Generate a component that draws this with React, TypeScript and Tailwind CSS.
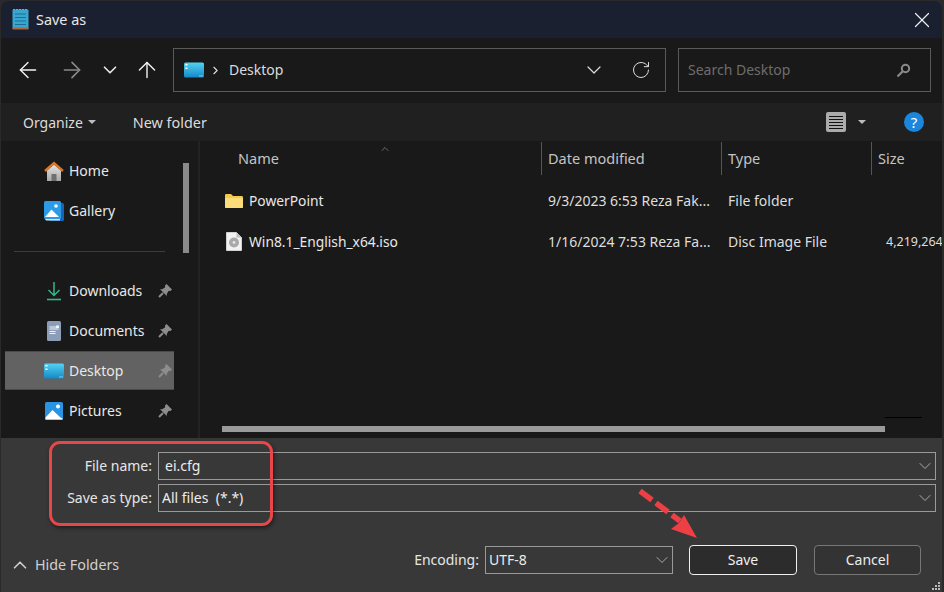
import { ArrowLeft, ArrowRight, ArrowUp, ChevronDown, ChevronRight, ChevronUp, RotateCw, X } from 'lucide-react';
import type { ReactNode } from 'react';

function NotepadIcon() {
  return (
    <svg width="17" height="21" viewBox="0 0 17 21">
      <rect x="0.5" y="0.5" width="16" height="19.5" rx="1" fill="#38a6cf" />
      <rect x="0.5" y="18.5" width="16" height="2" fill="#a8683a" />
      <path d="M3 5h11M3 8.500h11M3 12h11M3 15.500h11" stroke="#1c6f94" strokeWidth="1.200" />
      <path d="M2 1v-1M5 1v-1M8 1v-1M11 1v-1M14 1v-1" stroke="#cfe8f2" />
    </svg>
  );
}

function DesktopIcon({ id }: { id: string }) {
  return (
    <svg width="20" height="16" viewBox="0 0 20 16">
      <defs>
        <linearGradient id={id} x1="0" y1="0" x2="0" y2="1">
          <stop offset="0" stopColor="#53d2f2" />
          <stop offset="1" stopColor="#1488c8" />
        </linearGradient>
      </defs>
      <rect x="0" y="0.500" width="20" height="15" rx="1.500" fill={`url(#${id})`} />
      <rect x="1.500" y="2" width="2" height="1.500" fill="#fff" />
      <rect x="1.500" y="5.500" width="2" height="1.500" fill="#fff" />
      <rect x="15.500" y="13.500" width="1" height="1" fill="#fff" />
      <rect x="17.500" y="13.500" width="1" height="1" fill="#fff" />
    </svg>
  );
}

function HomeIcon() {
  return (
    <svg width="20" height="20" viewBox="0 0 20 20">
      <defs>
        <linearGradient id="homeBody" x1="0" y1="0" x2="0" y2="1">
          <stop offset="0" stopColor="#e4e4e4" />
          <stop offset="1" stopColor="#a8a8a8" />
        </linearGradient>
      </defs>
      <path d="M3 9.500 10 3.500l7 6V20H3z" fill="url(#homeBody)" />
      <rect x="7.500" y="13" width="5" height="7" rx="0.500" fill="#6f6f6f" />
      <path d="M1 10 10 2l9 8" fill="none" stroke="#d9782a" strokeWidth="2.400" />
    </svg>
  );
}

function GalleryIcon() {
  return (
    <svg width="20" height="20" viewBox="0 0 20 20">
      <rect x="5" y="2" width="15" height="18" rx="1.500" fill="#1565b5" />
      <rect x="0" y="0" width="17" height="18" rx="1.500" fill="#2b9be8" />
      <circle cx="12" cy="5" r="1.800" fill="#fff" />
      <path d="M1 16 7.500 8.500 15 16z" fill="#fff" />
      <path d="M1 18h15v1.500H2z" fill="#cfe6f8" />
    </svg>
  );
}

function DownloadIcon() {
  return (
    <svg width="16" height="20" viewBox="0 0 16 20">
      <path d="M8 1v13M2.500 9 8 14.500 13.500 9" fill="none" stroke="#36b58e" strokeWidth="1.500" />
      <path d="M1 18.500h14" stroke="#36b58e" strokeWidth="1.600" />
    </svg>
  );
}

function DocumentIcon() {
  return (
    <svg width="14" height="20" viewBox="0 0 14 20">
      <rect width="14" height="20" rx="1.500" fill="#8c9db8" />
      <path d="M2.500 6h9M2.500 8h9M2.500 10.500h6M2.500 12.500h6" stroke="#f1f4f8" strokeWidth="1" />
      <rect x="9" y="4.500" width="3" height="2.500" fill="#f1f4f8" />
    </svg>
  );
}

function PicturesIcon() {
  return (
    <svg width="18" height="18" viewBox="0 0 18 18">
      <rect width="18" height="18" rx="1.500" fill="#2a94e2" />
      <circle cx="13" cy="4.500" r="2" fill="#fff" />
      <path d="M0.500 15.500 7.500 8l8 7.500 2 1v1H0.500z" fill="#fff" />
    </svg>
  );
}

function PinIcon() {
  return (
    <svg width="14" height="14" viewBox="0 0 14 14">
      <path d="M8.500 0 14 5.500 12.500 7 10.800 6.800 8.800 9.800 8.800 12 2 5.200 4.200 5.200 7.200 3.200 7 1.500z" fill="#8d8d8d" />
      <path d="M5 9 1 13" stroke="#8d8d8d" strokeWidth="2" />
    </svg>
  );
}

function FolderIcon() {
  return (
    <svg width="18" height="14" viewBox="0 0 18 14">
      <path d="M0 1.500C0 .700.500 0 1.300 0H6l2 2h8.700c.700 0 1.300.600 1.300 1.300V12.700c0 .700-.600 1.300-1.300 1.300H1.300C.500 14 0 13.300 0 12.700z" fill="#f7c948" />
      <path d="M0 4h18v8.700c0 .700-.600 1.300-1.300 1.300H1.300C.500 14 0 13.300 0 12.700z" fill="#fbdc7a" />
    </svg>
  );
}

function DiscFileIcon() {
  return (
    <svg width="16" height="19" viewBox="0 0 16 19">
      <path d="M.500.500h10l5 5v13H.500z" fill="#f2f2f2" stroke="#d0d0d0" />
      <path d="M10.500.500v5h5" fill="#bdbdbd" />
      <circle cx="8" cy="10.500" r="5" fill="#a9a9a9" />
      <circle cx="8" cy="10.500" r="1.400" fill="#e8e8e8" />
    </svg>
  );
}

function SearchIcon() {
  return (
    <svg width="15" height="15" viewBox="0 0 15 15">
      <circle cx="9.500" cy="5.500" r="3.700" fill="none" stroke="#8a8a8a" strokeWidth="2" />
      <path d="M6.500 8.500 1.500 13.500" stroke="#8a8a8a" strokeWidth="2.200" />
    </svg>
  );
}

function ViewIcon() {
  return (
    <div className="flex h-5 w-5 flex-col justify-center gap-[2px] rounded-[2px] bg-[#ababab] px-[3px]">
      <div className="h-[1px] bg-[#111]" />
      <div className="h-[1px] bg-[#111]" />
      <div className="h-[1px] bg-[#111]" />
      <div className="h-[1px] bg-[#111]" />
      <div className="h-[1px] bg-[#111]" />
    </div>
  );
}

function Caret() {
  return <div className="h-0 w-0 border-x-[4.500px] border-t-[4.500px] border-x-transparent border-t-[#bdbdbd]" />;
}

function NavRow({ icon, label, pinned, active }: { icon: ReactNode; label: string; pinned?: boolean; active?: boolean }) {
  return (
    <div className={`flex items-center ${active ? 'mb-[1px] h-[39px] border-y border-[#4a4a4a] bg-[#626262]' : 'h-10'}`}>
      <div className="ml-[39px] flex w-5 shrink-0 justify-center">{icon}</div>
      <span className="ml-[5px] flex-1 text-[#e8e8e8]">{label}</span>
      {pinned && (
        <div className="mr-[2px]">
          <PinIcon />
        </div>
      )}
    </div>
  );
}

function FileRow({ icon, name, date, type, size }: { icon: ReactNode; name: string; date: string; type: string; size?: string }) {
  return (
    <div className="flex h-[41px] items-center whitespace-nowrap text-[#dedede]">
      <div className="flex w-[22px] shrink-0 justify-center pl-[2px]">{icon}</div>
      <span className="ml-[5px] w-[299px] shrink-0 text-[13.800px] text-[#e8e8e8]">{name}</span>
      <span className="w-[180px] shrink-0 overflow-hidden">{date}</span>
      <span className="w-[158px] shrink-0">{type}</span>
      <span className="text-[12.500px]">{size}</span>
    </div>
  );
}

function ColHead({ label, className }: { label: string; className: string }) {
  return (
    <div className={`flex h-[33px] shrink-0 items-center border-l border-[#555] pb-[2px] pl-[6px] text-[14.500px] text-[#c4c4c4] ${className}`}>{label}</div>
  );
}

function Combo({ value, className }: { value: string; className: string }) {
  return (
    <div className={`flex items-center justify-between border border-[#9a9a9a] text-[#ececec] ${className}`}>
      <span className="whitespace-pre">{value}</span>
      <ChevronDown size={20} strokeWidth={0.900} className="text-[#cfcfcf]" />
    </div>
  );
}

export default function App() {
  return (
    <div className="relative h-[592px] w-[944px] overflow-hidden bg-[#2a2a2a] pl-[1px] pr-[2px] pt-[1px] font-['Noto_Sans',sans-serif] text-[14px] leading-5">
      <div className="flex h-full flex-col overflow-hidden rounded-t-[8px]">
        <div className="flex h-[37px] shrink-0 items-center justify-between bg-[#1a2030] pl-[11px] pr-[7px]">
          <div className="flex items-center gap-[7px] text-[14.400px] text-[#e8e8e8]">
            <NotepadIcon />
            <span>Save as</span>
          </div>
          <X size={26} strokeWidth={1.100} className="text-[#f0f0f0]" />
        </div>

        <div className="flex h-[65px] shrink-0 items-center bg-[#191919] pb-[1px] pl-[14px]">
          <ArrowLeft size={26} strokeWidth={1.300} className="text-[#f2f2f2]" />
          <ArrowRight size={26} strokeWidth={1.500} className="ml-[18px] text-[#8a8a8a]" />
          <ChevronDown size={22} strokeWidth={1.800} className="ml-[14px] text-[#e8e8e8]" />
          <ArrowUp size={26} strokeWidth={1.300} className="ml-[13px] text-[#f2f2f2]" />
          <div className="ml-[13px] flex h-[44px] w-[493px] items-center border border-[#5a5a5a] pl-[10px] pr-[14px]">
            <DesktopIcon id="deskAddress" />
            <ChevronRight size={13} strokeWidth={2} className="ml-[5px] text-[#e0e0e0]" />
            <span className="ml-[7px] flex-1 text-[#dcdcdc]">Desktop</span>
            <ChevronDown size={24} strokeWidth={1.200} className="text-[#dcdcdc]" />
            <RotateCw size={20} strokeWidth={1.200} className="ml-[25px] text-[#dcdcdc]" />
          </div>
          <div className="ml-[12px] flex h-[44px] w-[253px] items-center justify-between border border-[#5a5a5a] pl-[9px] pr-[19px] text-[#6d6d6d]">
            <span>Search Desktop</span>
            <SearchIcon />
          </div>
        </div>

        <div className="flex h-[38px] shrink-0 items-center bg-[#202020] pl-[22px] text-[#dcdcdc]">
          <span className="mt-[2px]">Organize</span>
          <div className="ml-[5px]">
            <Caret />
          </div>
          <span className="ml-[37px] mt-[2px] text-[14.400px]">New folder</span>
          <div className="ml-auto">
            <ViewIcon />
          </div>
          <div className="ml-[12px]">
            <Caret />
          </div>
          <div className="ml-[38px] mr-[18px] flex h-5 w-5 items-center justify-center rounded-full bg-[#1a86dc] text-[15px] text-white">?</div>
        </div>

        <div className="flex min-h-0 flex-1 bg-[#191919]">
          <div className="flex w-[199px] shrink-0 border-r-2 border-[#232323] pt-[10px]">
            <div className="w-[173px] shrink-0 pl-[4px]">
              <NavRow icon={<HomeIcon />} label="Home" />
              <NavRow icon={<GalleryIcon />} label="Gallery" />
              <div className="flex h-10 items-center px-[9px]">
                <div className="h-[1px] w-full bg-[#3c3c3c]" />
              </div>
              <NavRow icon={<DownloadIcon />} label="Downloads" pinned />
              <NavRow icon={<DocumentIcon />} label="Documents" pinned />
              <NavRow icon={<DesktopIcon id="deskNav" />} label="Desktop" pinned active />
              <NavRow icon={<PicturesIcon />} label="Pictures" pinned />
            </div>
            <div className="ml-[9px] mt-[12px] h-[90px] w-[6px] bg-[#8a8a8a]" />
          </div>

          <div className="relative min-w-0 flex-1 overflow-hidden pl-[22px]">
            <div className="ml-[5px] flex h-[35px] items-center">
              <div className="flex h-[33px] w-[314px] shrink-0 items-center pb-[2px] pl-[11px] text-[14.500px] text-[#c4c4c4]">Name</div>
              <ColHead label="Date modified" className="w-[180px]" />
              <ColHead label="Type" className="w-[150px]" />
              <ColHead label="Size" className="w-[80px]" />
            </div>
            <div className="absolute left-[179px] top-[2px]">
              <ChevronUp size={12} strokeWidth={1} className="text-[#bdbdbd]" />
            </div>
            <div className="pt-[4px]">
              <FileRow icon={<FolderIcon />} name="PowerPoint" date="9/3/2023 6:53 Reza Fak..." type="File folder" />
              <FileRow icon={<DiscFileIcon />} name="Win8.1_English_x64.iso" date="1/16/2024 7:53 Reza Fa..." type="Disc Image File" size="4,219,264" />
            </div>
            <div className="absolute bottom-[20px] left-[685px] h-[1px] w-[37px] bg-black" />
            <div className="absolute bottom-[6px] left-[22px] h-[6px] w-[663px] bg-[#9a9a9a]" />
          </div>
        </div>

        <div className="flex h-[154px] shrink-0 flex-col bg-[#383838] pr-[6px] pt-[14px] text-[#e6e6e6]">
          <div className="flex h-[28px] items-center">
            <span className="w-[151px] shrink-0 text-right">File name:</span>
            <Combo value="ei.cfg" className="ml-[6px] h-[28px] flex-1 pl-[6px]" />
          </div>
          <div className="mt-[4px] flex h-[28px] items-center">
            <span className="w-[151px] shrink-0 text-right">Save as type:</span>
            <Combo value="All files  (*.*)" className="ml-[6px] h-[28px] flex-1 pl-[3px]" />
          </div>
          <div className="mt-[33px] flex h-[30px] items-center pl-[8px] pr-[15px]">
            <div className="mt-[10px] flex items-center text-[14.300px] text-[#d0d0d0]">
              <ChevronUp size={22} strokeWidth={1.800} className="text-[#cfcfcf]" />
              <span className="ml-[4px]">Hide Folders</span>
            </div>
            <span className="ml-auto">Encoding:</span>
            <Combo value="UTF-8" className="ml-[6px] h-[28px] w-[188px] pl-[3px]" />
            <button className="ml-[16px] h-[30px] w-[108px] rounded-[4px] border border-[#f0f0f0] bg-[#2c2c2c] text-[#f0f0f0]">Save</button>
            <button className="ml-[17px] h-[30px] w-[107px] rounded-[4px] border border-[#777] bg-[#333] text-[#ececec]">Cancel</button>
          </div>
        </div>
      </div>

      <div className="absolute left-[49px] top-[441px] h-[85px] w-[224px] rounded-[11px] border-[3px] border-[#e8474a] shadow-[1px_2px_4px_rgba(0,0,0,0.5)]" />
      <svg className="absolute left-[636px] top-[486px]" width="70" height="60" viewBox="0 0 70 60">
        <path d="M4 5 44 35" stroke="#ee4044" strokeWidth="5.500" strokeDasharray="15 5" strokeLinecap="butt" fill="none" />
        <path d="M61 52 35 43 43 37 48 29z" fill="#ee4044" />
      </svg>
      <div className="absolute bottom-[2px] right-[4px] grid grid-cols-3 gap-[1px]">
        <div />
        <div />
        <div className="h-[2px] w-[2px] bg-[#bbb]" />
        <div />
        <div className="h-[2px] w-[2px] bg-[#bbb]" />
        <div className="h-[2px] w-[2px] bg-[#bbb]" />
        <div className="h-[2px] w-[2px] bg-[#bbb]" />
        <div className="h-[2px] w-[2px] bg-[#bbb]" />
        <div className="h-[2px] w-[2px] bg-[#bbb]" />
      </div>
    </div>
  );
}
